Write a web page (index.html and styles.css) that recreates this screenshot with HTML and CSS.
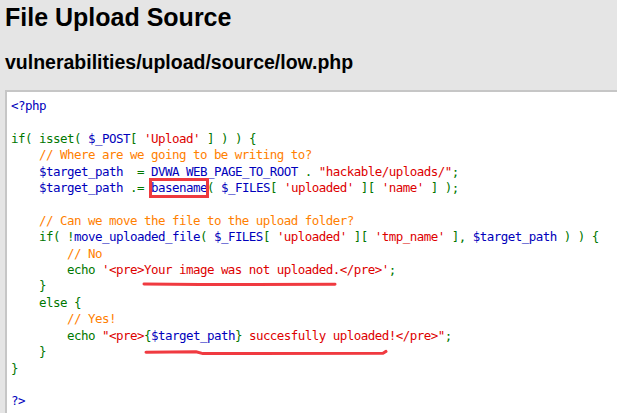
FILE: index.html
```html
<!DOCTYPE html>
<html>
<head>
<meta charset="utf-8">
<link rel="stylesheet" href="styles.css">
</head>
<body>
<div class="page">
  <h1 class="title">File Upload Source</h1>
  <h2 class="path">vulnerabilities/upload/source/low.php</h2>
  <div class="source">
<pre class="code"><span class="d">&lt;?php</span>

<span class="k">if( isset( </span><span class="d">$_POST</span><span class="k">[ </span><span class="s">'Upload'</span><span class="k"> ] ) ) {</span>
    <span class="c">// Where are we going to be writing to?</span>
    <span class="d">$target_path  </span><span class="k">= </span><span class="d">DVWA_WEB_PAGE_TO_ROOT </span><span class="k">. </span><span class="s">"hackable/uploads/"</span><span class="k">;</span>
    <span class="d">$target_path </span><span class="k">.= </span><span class="d">basename</span><span class="k">( </span><span class="d">$_FILES</span><span class="k">[ </span><span class="s">'uploaded'</span><span class="k"> ][ </span><span class="s">'name'</span><span class="k"> ] );</span>

    <span class="c">// Can we move the file to the upload folder?</span>
    <span class="k">if( !</span><span class="d">move_uploaded_file</span><span class="k">( </span><span class="d">$_FILES</span><span class="k">[ </span><span class="s">'uploaded'</span><span class="k"> ][ </span><span class="s">'tmp_name'</span><span class="k"> ], </span><span class="d">$target_path </span><span class="k">) ) {</span>
        <span class="c">// No</span>
        <span class="k">echo </span><span class="s">'&lt;pre&gt;Your image was not uploaded.&lt;/pre&gt;'</span><span class="k">;</span>
    <span class="k">}</span>
    <span class="k">else {</span>
        <span class="c">// Yes!</span>
        <span class="k">echo </span><span class="s">"&lt;pre&gt;</span><span class="k">{</span><span class="d">$target_path</span><span class="k">}</span><span class="s"> succesfully uploaded!&lt;/pre&gt;"</span><span class="k">;</span>
    <span class="k">}</span>
<span class="k">}</span>

<span class="d">?&gt;</span></pre>
    <div class="mark-box"></div>
    <svg class="marks" width="610" height="320" viewBox="7 92 610 320">
      <path d="M144 284 L200 284.5 L335 284.2" />
      <path d="M146 352.2 L196 351.8 L203 353.6 L383 353.2 L386 351.4" />
    </svg>
  </div>
</div>
</body>
</html>
```

FILE: styles.css
```css
html, body {
  margin: 0;
  padding: 0;
  overflow: hidden;
  background: #e5e5e5;
}

.page {
  padding: 0 0 0 5px;
  font-family: "Liberation Sans", Arial, sans-serif;
  color: #000;
}

.title {
  margin: 3px 0 0 0;
  font-size: 25px;
  line-height: 29px;
  font-weight: bold;
}

.path {
  margin: 19px 0 0 0;
  font-size: 19.5px;
  line-height: 23px;
  font-weight: bold;
}

.source {
  position: relative;
  margin-top: 16px;
  margin-right: -30px;
  background: #ffffff;
  border: 2px solid #c6c6c6;
  padding: 6px 4px 4px 4px;
}

.code {
  margin: 0;
  font-family: "DejaVu Sans Mono", "Liberation Mono", monospace;
  font-size: 12.5px;
  letter-spacing: -0.53px;
  line-height: 16.4px;
  color: #000;
}

.d { color: #0000bb; }
.k { color: #007700; }
.s { color: #dd0000; }
.c { color: #ff8000; }

.mark-box {
  position: absolute;
  left: 142px;
  top: 86px;
  width: 54px;
  height: 14px;
  border: 3px solid #ee3a3e;
}

.marks {
  position: absolute;
  left: 0;
  top: 0;
  pointer-events: none;
}

.marks path {
  fill: none;
  stroke: #f03a40;
  stroke-width: 3;
  stroke-linecap: round;
  stroke-linejoin: round;
}
```
